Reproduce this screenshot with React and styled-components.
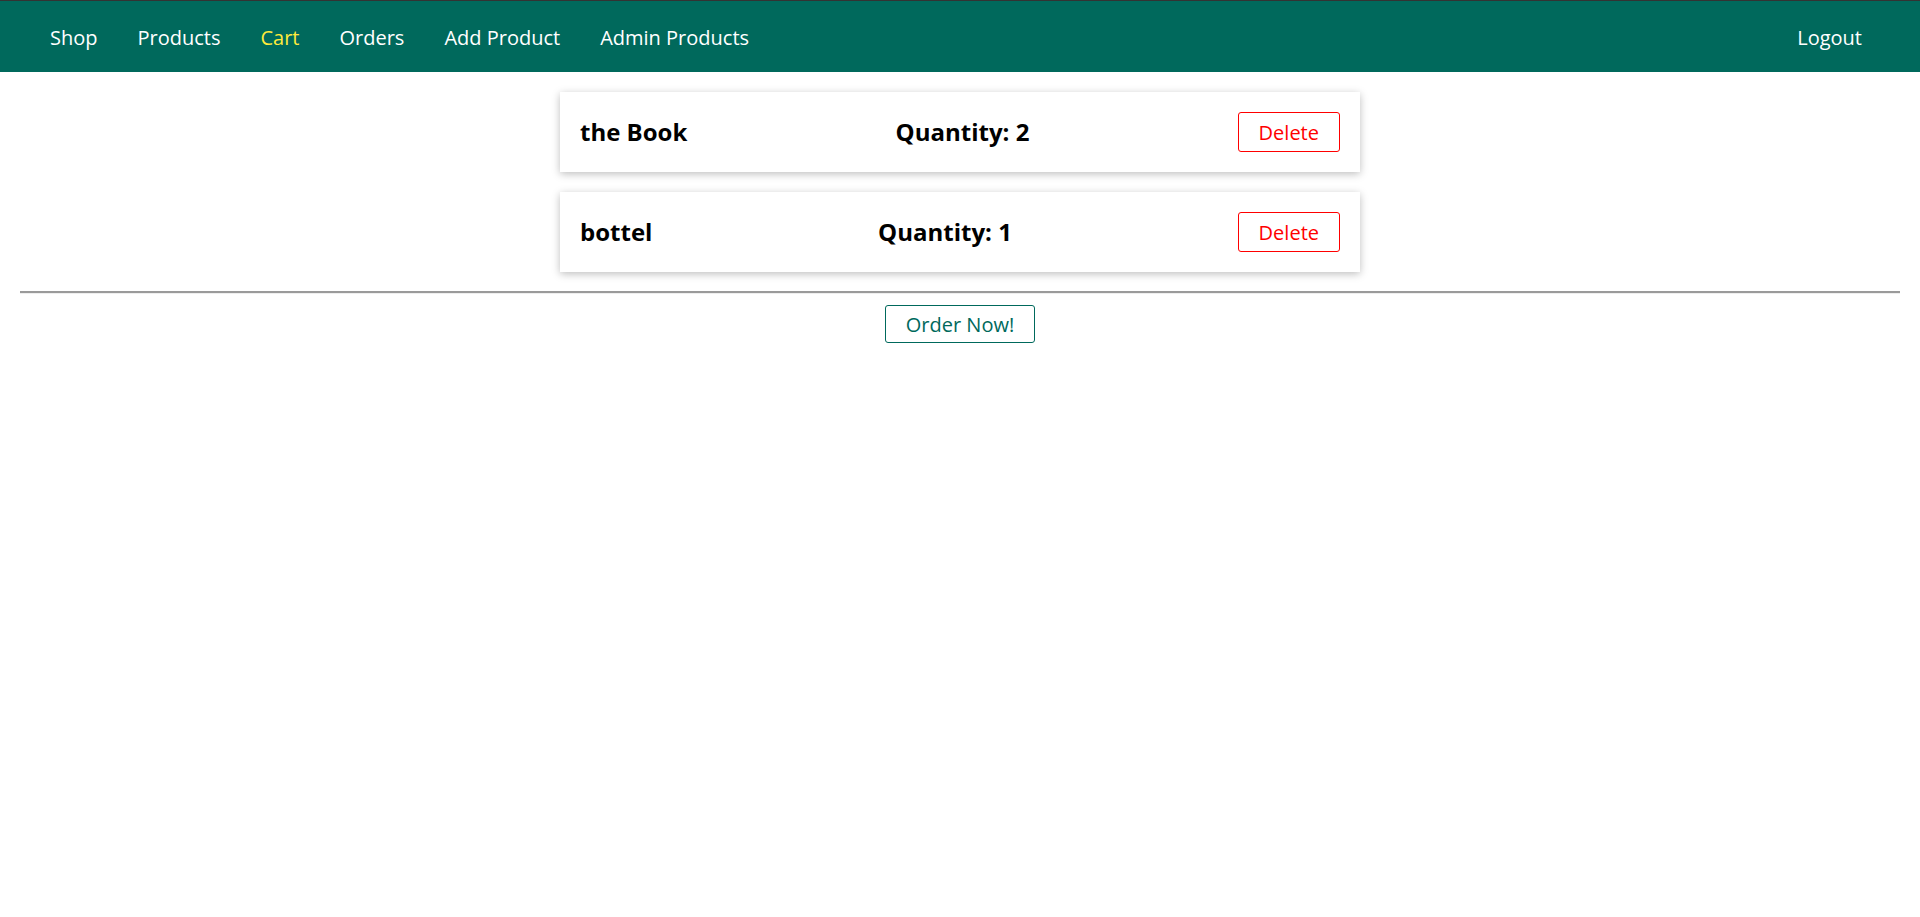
import React from "react";
import styled, { createGlobalStyle } from "styled-components";

const GlobalStyle = createGlobalStyle`
  * {
    box-sizing: border-box;
  }
  body {
    margin: 0;
    font-family: "Open Sans", "Liberation Sans", sans-serif;
    background: #ffffff;
  }
`;

const Header = styled.header`
  height: 72px;
  background-color: #00695c;
  border-top: 1px solid #333333;
  display: flex;
  align-items: center;
  justify-content: space-between;
  padding: 2px 58px 0 50px;
`;

const NavList = styled.ul`
  list-style: none;
  margin: 0;
  padding: 0;
  display: flex;
  align-items: center;
  gap: 40px;
`;

const NavLink = styled.a`
  font-size: 20px;
  line-height: 27px;
  text-decoration: none;
  color: ${({ active }) => (active ? "#ffeb3b" : "#ffffff")};
  cursor: pointer;
`;

const Main = styled.main`
  padding: 20px;
`;

const CartList = styled.ul`
  list-style: none;
  margin: 0 auto;
  padding: 0;
  width: 800px;
  display: flex;
  flex-direction: column;
  gap: 20px;
`;

const CartItem = styled.li`
  display: flex;
  align-items: center;
  justify-content: space-between;
  padding: 20px;
  background: #ffffff;
  box-shadow: 0 2px 8px rgba(0, 0, 0, 0.26);
`;

const ItemText = styled.h2`
  margin: 0;
  font-size: 24px;
  line-height: 32px;
  font-weight: 700;
  color: #000000;
`;

const OutlineButton = styled.button`
  font-family: inherit;
  font-size: 20px;
  line-height: 27px;
  height: ${({ tall }) => (tall ? "40px" : "38px")};
  padding: 0 20px;
  background: #ffffff;
  color: ${({ color }) => color};
  border: 1px solid ${({ color }) => color};
  border-radius: 3px;
  cursor: pointer;
`;

const Divider = styled.hr`
  margin: 19px 0 11px;
  border: none;
  border-top: 2px solid #9a9a9a;
  border-bottom: 1px solid #eeeeee;
`;

const Centered = styled.div`
  display: flex;
  justify-content: center;
`;

const items = [
  { id: 1, title: "the Book", quantity: 2 },
  { id: 2, title: "bottel", quantity: 1 },
];

const links = ["Shop", "Products", "Cart", "Orders", "Add Product", "Admin Products"];

export default function App() {
  return (
    <>
      <GlobalStyle />
      <Header>
        <NavList>
          {links.map((l) => (
            <li key={l}>
              <NavLink active={l === "Cart"}>{l}</NavLink>
            </li>
          ))}
        </NavList>
        <NavList>
          <li>
            <NavLink>Logout</NavLink>
          </li>
        </NavList>
      </Header>
      <Main>
        <CartList>
          {items.map((item) => (
            <CartItem key={item.id}>
              <ItemText>{item.title}</ItemText>
              <ItemText>Quantity: {item.quantity}</ItemText>
              <OutlineButton tall color="#ff0000">
                Delete
              </OutlineButton>
            </CartItem>
          ))}
        </CartList>
        <Divider />
        <Centered>
          <OutlineButton color="#00695c">Order Now!</OutlineButton>
        </Centered>
      </Main>
    </>
  );
}
